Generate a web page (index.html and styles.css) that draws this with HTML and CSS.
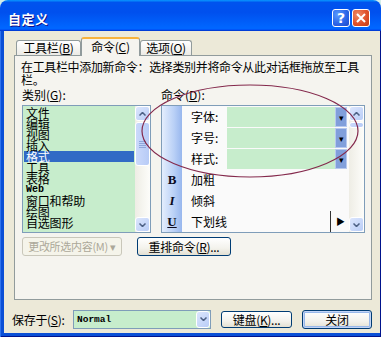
FILE: index.html
```html
<!DOCTYPE html>
<html lang="zh-CN">
<head>
  <meta charset="UTF-8">
  <title>自定义</title>
  <link rel="stylesheet" href="styles.css">
</head>
<body>
<div class="win">
  <div class="titlebar">
    <span class="title">自定义</span>
    <div class="caps">
      <span class="cap help">?</span>
      <span class="cap close">
        <svg width="10" height="10" viewBox="0 0 10 10"><path d="M1 1L9 9M9 1L1 9" stroke="#fff" stroke-width="2"/></svg>
      </span>
    </div>
  </div>
  <div class="frame">
    <div class="client">
      <div class="tabs">
        <div class="tab t1">工具栏(<u>B</u>)</div>
        <div class="tab t2 active">命令(<u>C</u>)</div>
        <div class="tab t3">选项(<u>O</u>)</div>
      </div>
      <div class="panel">
        <p class="desc">在工具栏中添加新命令：选择类别并将命令从此对话框拖放至工具<br>栏。</p>
        <div class="cols">
          <div class="col cat">
            <div class="lbl">类别(<u>G</u>):</div>
            <div class="listbox">
              <ul class="items">
                <li>文件</li>
                <li>编辑</li>
                <li>视图</li>
                <li>插入</li>
                <li class="sel">格式</li>
                <li>工具</li>
                <li>表格</li>
                <li class="web">Web</li>
                <li>窗口和帮助</li>
                <li>绘图</li>
                <li>自选图形</li>
              </ul>
              <div class="vs">
                <span class="sbtn"><svg width="7" height="4" viewBox="0 0 7 4"><path d="M0.5 3.5L3.5 0.5L6.5 3.5" fill="none" stroke="#4d6185" stroke-width="1.5"/></svg></span>
                <span class="thumb big"><i></i><i></i><i></i><i></i></span>
                <span class="track"></span>
                <span class="sbtn"><svg width="7" height="4" viewBox="0 0 7 4"><path d="M0.5 0.5L3.5 3.5L6.5 0.5" fill="none" stroke="#4d6185" stroke-width="1.5"/></svg></span>
              </div>
            </div>
          </div>
          <div class="col cmd">
            <div class="lbl">命令(<u>D</u>):</div>
            <div class="listbox">
              <div class="rows">
                <div class="row"><span class="ico"></span><span class="name">字体:</span><span class="field"><span class="dd">▾</span></span></div>
                <div class="row"><span class="ico"></span><span class="name">字号:</span><span class="field"><span class="dd">▾</span></span></div>
                <div class="row"><span class="ico"></span><span class="name">样式:</span><span class="field"><span class="dd">▾</span></span></div>
                <div class="row"><span class="ico b">B</span><span class="name">加粗</span></div>
                <div class="row"><span class="ico i">I</span><span class="name">倾斜</span></div>
                <div class="row"><span class="ico u">U</span><span class="name grow">下划线</span><span class="sep"></span><span class="more">▶</span></div>
              </div>
              <div class="vs">
                <span class="sbtn"><svg width="7" height="4" viewBox="0 0 7 4"><path d="M0.5 3.5L3.5 0.5L6.5 3.5" fill="none" stroke="#4d6185" stroke-width="1.5"/></svg></span>
                <span class="thumb small"></span>
                <span class="track"></span>
                <span class="sbtn"><svg width="7" height="4" viewBox="0 0 7 4"><path d="M0.5 0.5L3.5 3.5L6.5 0.5" fill="none" stroke="#4d6185" stroke-width="1.5"/></svg></span>
              </div>
            </div>
          </div>
        </div>
        <div class="btnrow">
          <span class="btn off">更改所选内容(M) ▾</span>
          <span class="btn rearr">重排命令(<u>R</u>)...</span>
        </div>
      </div>
      <div class="footer">
        <span class="flbl">保存于(<u>S</u>):</span>
        <span class="combo">
          <span class="val">Normal</span>
          <span class="sbtn cdd"><svg width="7" height="4" viewBox="0 0 7 4"><path d="M0.5 0.5L3.5 3.5L6.5 0.5" fill="none" stroke="#4d6185" stroke-width="1.5"/></svg></span>
        </span>
        <span class="btn kb">键盘(<u>K</u>)...</span>
        <span class="btn close-btn">关闭</span>
      </div>
    </div>
  </div>
</div>
<svg class="mark" width="381" height="337" viewBox="0 0 381 337">
  <ellipse cx="250" cy="131" rx="108" ry="46" fill="none" stroke="#84294c" stroke-width="1.2"/>
</svg>
</body>
</html>
```

FILE: styles.css
```css
* {
  box-sizing: border-box;
}

body {
  margin: 0;
  background: #d3ede8;
  font: 12px "Noto Sans CJK SC", sans-serif;
  color: #000;
  position: relative;
}

u {
  text-decoration: underline;
}

.win {
  width: 381px;
  height: 337px;
  display: flex;
  flex-direction: column;
}

.titlebar {
  height: 31px;
  flex: none;
  display: flex;
  align-items: center;
  justify-content: space-between;
  padding: 5px 11px 0 8px;
  border-radius: 8px 8px 0 0;
  background: linear-gradient(180deg, #0997ff, #0053ee 8%, #0050ee 40%, #06f 88%, #06f 93%, #005bff 95%, #003dd7 96%, #003dd7);
}

.title {
  color: #fff;
  font-weight: bold;
  font-size: 13px;
  letter-spacing: 0.5px;
  text-shadow: 1px 1px #0f1089;
}

.caps {
  display: flex;
  gap: 2px;
}

.cap {
  width: 18px;
  height: 18px;
  border: 1px solid #fff;
  border-radius: 3px;
  display: flex;
  align-items: center;
  justify-content: center;
  color: #fff;
  font: bold 14px "DejaVu Sans", sans-serif;
}

.help {
  background: radial-gradient(circle at 30% 30%, #5a9bff, #2a62e6 60%, #1c48c8);
}

.close {
  background: radial-gradient(circle at 30% 30%, #f08a66, #e0522c 55%, #c23c14);
}

.frame {
  flex: 1;
  display: flex;
  background: #0a4fd6;
  padding: 0 5px 4px 4px;
  box-shadow: inset 1px 0 #2f73ee, inset -1px 0 #00138c, inset 0 -1px #00138c;
}

.client {
  flex: 1;
  background: #ece9d8;
  display: flex;
  flex-direction: column;
  padding: 6px 8px 0 4px;
}

/* tabs */
.tabs {
  display: flex;
  align-items: flex-end;
  height: 18px;
  padding-left: 8px;
  position: relative;
  z-index: 1;
}

.tab {
  height: 15px;
  line-height: 14px;
  border: 1px solid #919b9c;
  border-bottom: none;
  border-radius: 3px 3px 0 0;
  background: linear-gradient(#fff, #ecebe6);
  text-align: center;
  letter-spacing: -0.3px;
}

.t1 { width: 65px; }
.t2 { width: 59px; }
.t3 { width: 52px; }

.tab.active {
  height: 19px;
  line-height: 16px;
  margin-bottom: -1px;
  background: #f5f4ef;
  border-top: 2px solid #f7b33c;
}

.panel {
  height: 245px;
  margin-left: 6px;
  border: 1px solid #919b9c;
  background: #f5f4ef;
  padding: 0 6px 0 6px;
}

.desc {
  margin: 4px 0 0 0;
  line-height: 13px;
  white-space: nowrap;
  letter-spacing: -0.35px;
}

.cols {
  display: flex;
  gap: 10px;
  margin-top: 3px;
  padding-left: 1px;
}

.lbl {
  height: 12px;
  line-height: 12px;
  margin-bottom: 4px;
}

.listbox {
  display: flex;
  height: 128px;
  border: 1px solid #7f9db9;
}

.cat .listbox {
  width: 129px;
}

.cmd .listbox {
  width: 204px;
}

.items {
  flex: 1;
  list-style: none;
  margin: 0;
  padding: 1px 1px 0 1px;
  background: #c7edcc;
}

.items li {
  height: 11px;
  line-height: 11px;
  padding-left: 2px;
  letter-spacing: -0.2px;
}

.items li.sel {
  background: #316ac5;
  color: #fff;
}

.items li.web {
  font: bold 10px "Liberation Mono", monospace;
  line-height: 11px;
  letter-spacing: 0;
}

/* scrollbars */
.vs {
  width: 15px;
  display: flex;
  flex-direction: column;
  background: linear-gradient(90deg, #eeede5, #fdfdfa);
}

.sbtn {
  height: 15px;
  flex: none;
  display: flex;
  align-items: center;
  justify-content: center;
  border: 1px solid #fff;
  border-radius: 3px;
  background: linear-gradient(135deg, #dce6fd, #b9cdf7);
}

.thumb {
  flex: none;
  margin-top: 1px;
  border: 1px solid #fff;
  border-radius: 3px;
  background: linear-gradient(90deg, #cbd9fb, #b7cbf6);
  display: flex;
  flex-direction: column;
  align-items: center;
  justify-content: center;
  gap: 1px;
}

.thumb.big {
  height: 44px;
}

.thumb.small {
  height: 6px;
}

.thumb i {
  width: 7px;
  height: 1px;
  background: #8fa7dc;
}

.track {
  flex: 1;
}

/* commands list */
.rows {
  flex: 1;
  background: linear-gradient(90deg, #e4eefd 0, #b9d0f6 12px, #98b7ee 20px, #fafafa 20px);
}

.row {
  height: 21px;
  display: flex;
  align-items: center;
}

.ico {
  width: 20px;
  text-align: center;
  font: bold 13px "Liberation Serif", serif;
  color: #0a0a20;
}

.ico.i {
  font-style: italic;
}

.ico.u {
  text-decoration: underline;
}

.name {
  width: 45px;
  padding-left: 9px;
}

.name.grow {
  flex: 1;
}

.field {
  width: 120px;
  height: 20px;
  background: #c7edcc;
  display: flex;
  justify-content: flex-end;
}

.dd {
  width: 12px;
  background: #819fdb;
  border: 1px solid #b7c8ee;
  font-size: 9px;
  line-height: 20px;
  text-align: center;
  color: #000;
}

.sep {
  width: 1px;
  height: 21px;
  background: #333;
  margin-right: 5px;
}

.more {
  font-size: 9px;
  width: 13px;
}

/* buttons */
.btnrow {
  display: flex;
  gap: 15px;
  margin-top: 4px;
  padding-left: 1px;
}

.btn {
  height: 19px;
  line-height: 17px;
  border: 1px solid #003c74;
  border-radius: 3px;
  background: linear-gradient(#fff, #f3f2ec 60%, #e3e0d3);
  text-align: center;
  letter-spacing: -0.3px;
}

.btn.off {
  width: 100px;
  border-color: #c9c7ba;
  color: #aca899;
  background: #f5f4ea;
  font-size: 11px;
}

.btn.rearr {
  width: 94px;
}

.footer {
  display: flex;
  align-items: center;
  height: 20px;
  margin-top: 9px;
  padding-left: 4px;
}

.flbl {
  width: 61px;
  letter-spacing: -0.3px;
}

.combo {
  width: 138px;
  height: 19px;
  display: flex;
  align-items: center;
  border: 1px solid #7f9db9;
  background: #c7edcc;
}

.combo .val {
  flex: 1;
  padding-left: 3px;
  font: bold 9.5px "Liberation Mono", monospace;
}

.cdd {
  width: 14px;
  height: 17px;
}

.btn.kb {
  width: 71px;
  height: 17px;
  line-height: 15px;
  margin-left: 10px;
}

.btn.close-btn {
  width: 70px;
  margin-left: 10px;
  box-shadow: inset 0 0 0 1px #c2d4f6, inset 0 0 0 2px #98b8ea;
}

.mark {
  position: absolute;
  top: 0;
  left: 0;
  pointer-events: none;
}
```
